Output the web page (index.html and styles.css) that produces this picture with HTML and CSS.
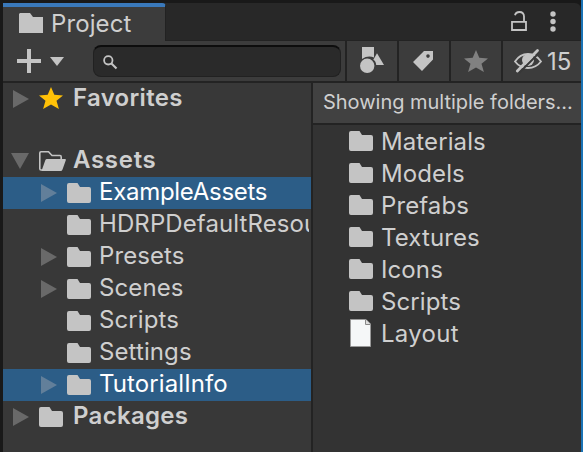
FILE: index.html
```html
<!DOCTYPE html>
<html lang="en">
<head>
<meta charset="utf-8">
<title>Project</title>
<link rel="stylesheet" href="styles.css">
</head>
<body>
<svg class="defs" width="0" height="0">
  <symbol id="folder" viewBox="0 0 24 20"><path d="M2 0H10.5L13 4H22Q24 4 24 6V18Q24 20 22 20H2Q0 20 0 18V2Q0 0 2 0Z"/></symbol>
  <symbol id="right" viewBox="0 0 16 18"><path d="M0 0L16 9L0 18Z"/></symbol>
  <symbol id="down" viewBox="0 0 18 16"><path d="M0 0H18L9 16Z"/></symbol>
  <symbol id="star" viewBox="0 0 24 22"><path d="M12 0L15.3 7.8L24 8.4L17.5 13.7L19.9 22L12 17.6L4.1 22L6.5 13.7L0 8.4L8.7 7.8Z"/></symbol>
</svg>
<div class="window">
  <header class="tabs">
    <div class="tab">
      <svg class="folder" viewBox="0 0 24 20"><path d="M1 0H11L14 4H24V20H0V1Z"/></svg>
      <span class="title">Project</span>
    </div>
    <div class="tab-actions">
      <svg class="lock" viewBox="0 0 16 20"><path d="M1 10.8H15V19H1ZM13 10.8V5.5Q13 1 8.5 1Q4.7 1 4 4.3" fill="none" stroke="#c4c4c4" stroke-width="1.8"/></svg>
      <svg class="dots" viewBox="0 0 6 21"><circle cx="3" cy="3" r="2.7"/><circle cx="3" cy="10.5" r="2.7"/><circle cx="3" cy="18" r="2.7"/></svg>
    </div>
  </header>
  <div class="toolbar">
    <div class="create">
      <svg class="plus" viewBox="0 0 24 24"><path d="M10 0H14V10H24V14H14V24H10V14H0V10H10Z"/></svg>
      <svg class="caret" viewBox="0 0 14 9"><path d="M0 0H14L7 9Z"/></svg>
    </div>
    <div class="search"><svg class="lens" viewBox="0 0 15 15"><circle cx="5.3" cy="5.3" r="4.2" fill="none" stroke="#c4c4c4" stroke-width="1.8"/><path d="M8.2 8.2L13.5 13.5" stroke="#c4c4c4" stroke-width="2.1"/></svg></div>
    <div class="button"><svg class="shapes" viewBox="0 0 24 26"><path d="M2 0H14V10.5Q8 8 2 12ZM17 6.2L24 18H16.2Q15.7 13.8 13.3 12.8Z"/><circle cx="7.2" cy="18.8" r="7.2"/></svg></div>
    <div class="button"><svg class="tag" viewBox="0 0 20 20"><path fill-rule="evenodd" d="M11 0H20V8.5L9 20L0 11ZM15 3.3A1.8 1.8 0 1 0 15 6.9A1.8 1.8 0 1 0 15 3.3Z"/></svg></div>
    <div class="button"><svg class="star dim"><use href="#star"/></svg></div>
    <div class="button hidden-count">
      <svg class="eye" viewBox="0 0 28 24"><path d="M1 12.5Q6 5 14 5T27 12.5Q22 19 14 19T1 12.5Z" fill="none" stroke="#c4c4c4" stroke-width="1.8"/><circle cx="14" cy="11" r="6"/><path d="M5 24L26 3" stroke="#383838" stroke-width="2"/><path d="M3.3 22L23.5 1.5" stroke="#c4c4c4" stroke-width="2.8" stroke-linecap="round"/></svg>
      <span class="count">15</span>
    </div>
  </div>
  <main class="content">
    <nav class="tree">
      <div class="row root favorites"><svg class="arrow"><use href="#right"/></svg><svg class="star gold"><use href="#star"/></svg><span>Favorites</span></div>
      <div class="row"></div>
      <div class="row root assets"><svg class="open-arrow"><use href="#down"/></svg><svg class="open-folder" viewBox="0 0 27 20"><path d="M4 19H2Q.8 19 .8 17.8V2Q.8.8 2 .8H9.5L13 4.5H21Q22.2 4.5 22.2 6V9" fill="none" stroke="#c4c4c4" stroke-width="1.6"/><path d="M8 8H26Q27.2 8 26.8 9.2L23.5 18.5Q23 20 21.5 20H2.5L6.3 9.2Q6.7 8 8 8Z"/></svg><span>Assets</span></div>
      <div class="row child selected"><svg class="arrow"><use href="#right"/></svg><svg class="folder"><use href="#folder"/></svg><span class="example">ExampleAssets</span></div>
      <div class="row child leaf"><svg class="folder"><use href="#folder"/></svg><span class="long">HDRPDefaultResources</span></div>
      <div class="row child"><svg class="arrow"><use href="#right"/></svg><svg class="folder"><use href="#folder"/></svg><span>Presets</span></div>
      <div class="row child"><svg class="arrow"><use href="#right"/></svg><svg class="folder"><use href="#folder"/></svg><span>Scenes</span></div>
      <div class="row child leaf"><svg class="folder"><use href="#folder"/></svg><span>Scripts</span></div>
      <div class="row child leaf"><svg class="folder"><use href="#folder"/></svg><span>Settings</span></div>
      <div class="row child selected"><svg class="arrow"><use href="#right"/></svg><svg class="folder"><use href="#folder"/></svg><span>TutorialInfo</span></div>
      <div class="row root"><svg class="arrow"><use href="#right"/></svg><svg class="folder"><use href="#folder"/></svg><span>Packages</span></div>
    </nav>
    <section class="files">
      <div class="path">Showing multiple folders...</div>
      <div class="item"><svg class="folder"><use href="#folder"/></svg><span>Materials</span></div>
      <div class="item"><svg class="folder"><use href="#folder"/></svg><span>Models</span></div>
      <div class="item"><svg class="folder"><use href="#folder"/></svg><span>Prefabs</span></div>
      <div class="item"><svg class="folder"><use href="#folder"/></svg><span>Textures</span></div>
      <div class="item"><svg class="folder"><use href="#folder"/></svg><span>Icons</span></div>
      <div class="item"><svg class="folder"><use href="#folder"/></svg><span>Scripts</span></div>
      <div class="item"><svg class="page" viewBox="0 0 21 28"><path d="M.5 .5H16L20.5 5V27.5H.5Z" fill="#f5f7f8" stroke="#999"/><path d="M15.5 .5V5.5H20.5" fill="#ddd" stroke="#888"/></svg><span class="layout">Layout</span></div>
    </section>
  </main>
</div>
</body>
</html>
```

FILE: styles.css
```css
* { box-sizing: border-box; }
body {
  margin: 0;
  background: #191919;
  color: #cfcfcf;
  font: 400 24px/32px Inter, sans-serif;
  letter-spacing: .1px;
}
svg { display: block; flex: none; fill: #c4c4c4; overflow: visible; }
.defs { position: absolute; }
.window {
  width: 583px;
  height: 452px;
  padding: 3px 0 0 3px;
  border-right: 2px solid #1a73b5;
  display: flex;
  flex-direction: column;
  overflow: hidden;
}
.tabs {
  height: 38px;
  flex: none;
  display: flex;
  justify-content: space-between;
  background: #282828;
  border-radius: 0 6px 0 0;
  box-shadow: inset 0 -1px #232323;
}
.tab {
  width: 163px;
  height: 38px;
  display: flex;
  align-items: center;
  padding: 0 0 0 16px;
  gap: 8px;
  background: #3c3c3c;
  border-top: 4px solid #3a79bb;
  border-right: 1px solid #222;
  border-radius: 0 4px 0 0;
}
.tab .folder { margin-top: -2px; }
.tab-actions { display: flex; align-items: flex-start; gap: 23px; padding: 8px 25px 0 0; }
.lock { width: 16px; height: 20px; }
.dots { width: 6px; height: 21px; }
.folder { width: 24px; height: 20px; }
.toolbar {
  height: 42px;
  flex: none;
  display: flex;
  background: #3c3c3c;
  border-bottom: 2px solid #232323;
}
.create { width: 90px; display: flex; align-items: center; padding-left: 14px; gap: 9px; }
.plus { width: 24px; height: 24px; }
.caret { width: 14px; height: 9px; }
.search {
  width: 248px;
  height: 32px;
  margin: 4px 4px 0 0;
  padding: 10px;
  background: #2a2a2a;
  border: 1px solid #212121;
  border-top: 2px solid #0d0d0d;
  border-radius: 8px;
}
.lens { width: 15px; height: 15px; margin: -2px 0 0 -1px; }
.button {
  width: 52px;
  border-left: 2px solid #232323;
  display: flex;
  align-items: center;
  justify-content: center;
}
.shapes { width: 24px; height: 26px; margin: -3px 0 0 0; }
.tag { width: 20px; height: 20px; margin-right: 3px; }
.star { width: 24px; height: 22px; }
.dim { fill: #818181; }
.gold { fill: #ffc107; }
.hidden-count { width: 80px; justify-content: flex-start; padding-left: 11px; gap: 4px; }
.eye { width: 28px; height: 24px; }
.count { margin: 2px 0 0 1px; }
.content { flex: 1; min-height: 0; display: flex; }
.tree { width: 310px; background: #383838; border-right: 2px solid #232323; overflow: hidden; }
.row { height: 32px; display: flex; align-items: center; white-space: nowrap; }
.row:first-child { height: 30px; }
.root { padding-left: 10px; font-weight: 600; letter-spacing: .3px; }
.root span { margin: -3px 0 0 10px; }
.root.favorites span { margin-top: 0; }
.arrow { width: 16px; height: 18px; margin-right: 10px; fill: #696969; }
.favorites .arrow { margin-top: 2px; }
.open-arrow { width: 18px; height: 16px; margin-right: 10px; fill: #696969; }
.assets { padding-left: 8px; }
.open-folder { width: 27px; height: 20px; }
.root.assets span { margin-left: 7px; letter-spacing: .7px; }
.child { padding-left: 38px; }
.child span { margin: -2px 0 0 8px; }
.child .example { letter-spacing: -.28px; }
.child .long { margin-right: 2px; overflow: hidden; }
.leaf { padding-left: 64px; }
.selected { background: #2c5d87; color: #fff; }
.selected .arrow { fill: #627f9a; }
.files { flex: 1; min-width: 0; background: #333; }
.path {
  height: 42px;
  padding-left: 10px;
  background: #414141;
  border-bottom: 2px solid #232323;
  font-size: 20px;
  line-height: 39px;
  letter-spacing: -.02px;
  white-space: nowrap;
}
.item { height: 32px; padding-left: 36px; display: flex; align-items: center; gap: 8px; }
.item span { margin-top: 2px; }
.item .layout { letter-spacing: .3px; }
.page { width: 21px; height: 28px; margin: 0 2px 0 1px; }
```
